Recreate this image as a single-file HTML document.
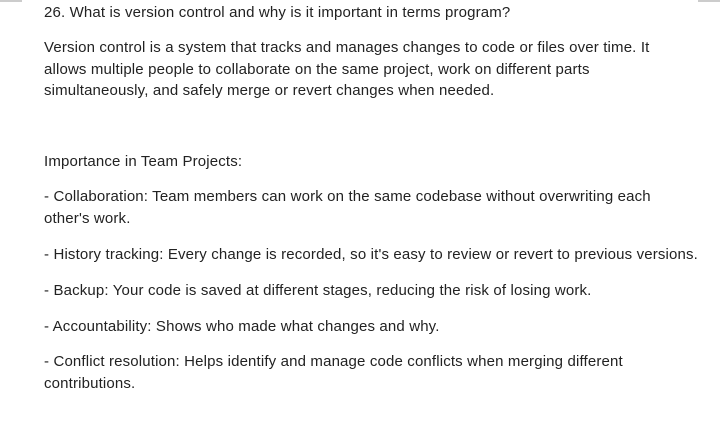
<!DOCTYPE html>
<html><head><style>
body{margin:0;width:720px;height:432px;background:#fff;position:relative;overflow:hidden;font-family:"Liberation Sans",sans-serif;font-size:15px;color:#222;}
.l{position:absolute;left:44px;white-space:nowrap;line-height:16px;letter-spacing:0.15px;}
.m{position:absolute;top:0;height:2px;background:#ccc;width:22px;}
</style></head><body>
<div class="m" style="left:0"></div><div class="m" style="left:698px"></div>
<div class="l" style="top:5px">26. What is version control and why is it important in terms program?</div>
<div class="l" style="top:40px">Version control is a system that tracks and manages changes to code or files over time. It</div>
<div class="l" style="top:62px">allows multiple people to collaborate on the same project, work on different parts</div>
<div class="l" style="top:83px">simultaneously, and safely merge or revert changes when needed.</div>
<div class="l" style="top:154px">Importance in Team Projects:</div>
<div class="l" style="top:189px">- Collaboration: Team members can work on the same codebase without overwriting each</div>
<div class="l" style="top:211px">other's work.</div>
<div class="l" style="top:247px">- History tracking: Every change is recorded, so it's easy to review or revert to previous versions.</div>
<div class="l" style="top:283px">- Backup: Your code is saved at different stages, reducing the risk of losing work.</div>
<div class="l" style="top:319px">- Accountability: Shows who made what changes and why.</div>
<div class="l" style="top:354px">- Conflict resolution: Helps identify and manage code conflicts when merging different</div>
<div class="l" style="top:376px">contributions.</div>
</body></html>
